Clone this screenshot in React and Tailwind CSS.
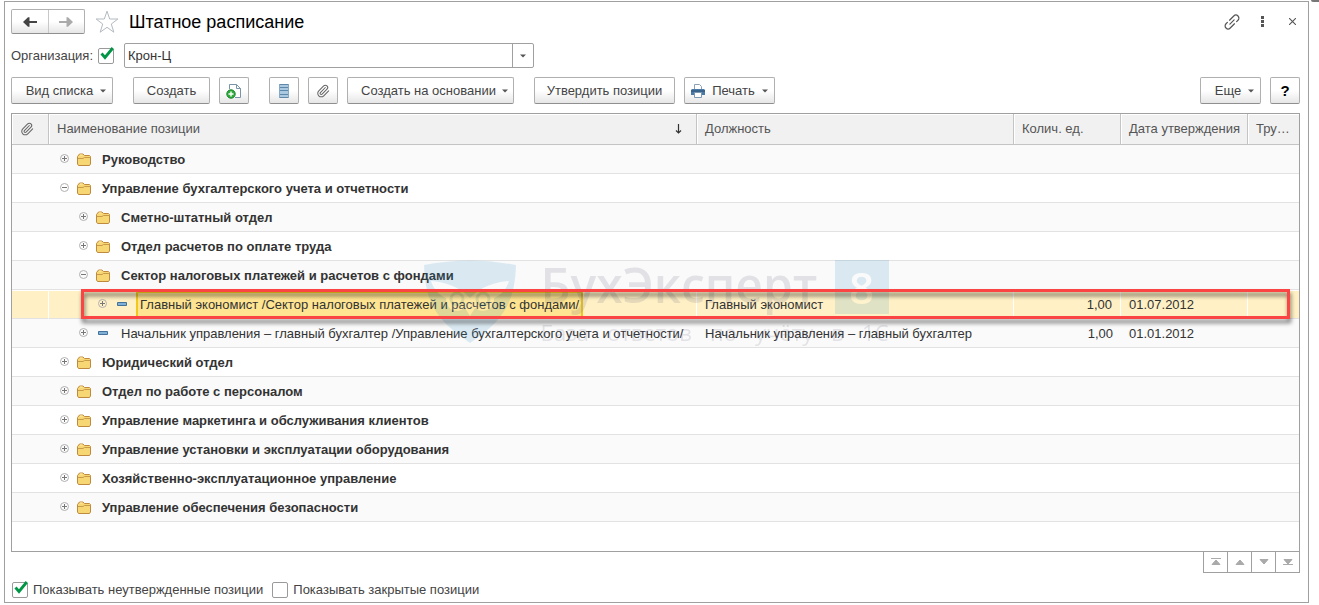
import React, { useState } from 'react';
import clsx from 'clsx';
import { Paperclip } from 'lucide-react';

const ROWS = [
  { id: 1, level: 0, kind: 'folder', name: 'Руководство' },
  { id: 2, level: 0, kind: 'folder', open: true, name: 'Управление бухгалтерского учета и отчетности' },
  { id: 3, level: 1, kind: 'folder', name: 'Сметно-штатный отдел' },
  { id: 4, level: 1, kind: 'folder', name: 'Отдел расчетов по оплате труда' },
  { id: 5, level: 1, kind: 'folder', open: true, name: 'Сектор налоговых платежей и расчетов с фондами' },
  {
    id: 6,
    level: 2,
    kind: 'item',
    name: 'Главный экономист /Сектор налоговых платежей и расчетов с фондами/',
    post: 'Главный экономист',
    count: '1,00',
    date: '01.07.2012',
  },
  {
    id: 7,
    level: 1,
    kind: 'item',
    name: 'Начальник управления – главный бухгалтер /Управление бухгалтерского учета и отчетности/',
    post: 'Начальник управления – главный бухгалтер',
    count: '1,00',
    date: '01.01.2012',
  },
  { id: 8, level: 0, kind: 'folder', name: 'Юридический отдел' },
  { id: 9, level: 0, kind: 'folder', name: 'Отдел по работе с персоналом' },
  { id: 10, level: 0, kind: 'folder', name: 'Управление маркетинга и обслуживания клиентов' },
  { id: 11, level: 0, kind: 'folder', name: 'Управление установки и эксплуатации оборудования' },
  { id: 12, level: 0, kind: 'folder', name: 'Хозяйственно-эксплуатационное управление' },
  { id: 13, level: 0, kind: 'folder', name: 'Управление обеспечения безопасности' },
];

const INDENT = ['pl-[11px]', 'pl-[30px]', 'pl-[49px]'];

function Caret() {
  return (
    <svg width="6" height="4" viewBox="0 0 6 4" className="mt-px shrink-0" fill="#555">
      <path d="M0 0.500h6L3 3.500z" />
    </svg>
  );
}

function Clip() {
  return <Paperclip size={14} strokeWidth={1.8} color="#666" />;
}

function DocAdd() {
  return (
    <svg width="16" height="16" viewBox="0 0 16 16" fill="none">
      <path d="M3.500 6V1.500h7l4 4v9H9" fill="#fff" stroke="#7b93a8" />
      <path d="M10.500 1.500v4h4" stroke="#7b93a8" />
      <circle cx="5" cy="11" r="4.200" fill="#2fae3b" stroke="#16832a" />
      <path d="M5 8.500v5M2.500 11h5" stroke="#fff" strokeWidth="1.400" />
    </svg>
  );
}

function ListLines() {
  return (
    <svg width="10" height="14" viewBox="0 0 10 14">
      <path d="M0 0h10v14H0z" fill="#a9c9e2" />
      <path d="M0 .5h10M0 3.500h10M0 6.500h10M0 10.500h10M0 13.500h10" stroke="#5f88a8" />
      <path d="M.5 0v14M9.500 0v14" stroke="#86a9c4" />
    </svg>
  );
}

function Printer() {
  return (
    <svg width="14" height="14" viewBox="0 0 14 14">
      <path d="M3.500 5V.5h5l2 2V5" fill="#fff" stroke="#8ba0b5" />
      <path d="M1 5h12l1 1v5h-3V9H3v2H0V6z" fill="#4a7aa5" />
      <path d="M0 7h14" stroke="#274f75" />
      <path d="M3.500 8.500h7v5h-7z" fill="#fff" stroke="#7e98b0" />
    </svg>
  );
}

function Star() {
  return (
    <svg width="24" height="24" viewBox="0 0 24 24" fill="#fff" stroke="#b3bac1" strokeWidth="1">
      <path d="M12 1.200 14.700 9h8.200l-6.600 5 2.500 8.200L12 17.300l-6.800 4.900L7.700 14 1.100 9h8.200z" />
    </svg>
  );
}

function Arrow({ dir, color }) {
  return (
    <svg width="14" height="10" viewBox="0 0 14 10" fill={color}>
      <path d={dir === 'left' ? 'M0 5 5 0.200h1.500v3.800H14v2H6.500v3.800H5z' : 'M14 5 9 0.200H7.500v3.800H0v2h7.500v3.800H9z'} />
    </svg>
  );
}

function Expander({ open }) {
  return (
    <svg width="9" height="11" viewBox="0 0 9 11" fill="none" className="shrink-0">
      <circle cx="4.500" cy="4.500" r="4" stroke="#b0b0b0" />
      <path d={open ? 'M2 4.500h5' : 'M2 4.500h5M4.500 2v5'} stroke="#777" />
    </svg>
  );
}

function Folder() {
  return (
    <svg width="14" height="14" viewBox="0 0 14 14" className="shrink-0">
      <path
        d="M.5 11V3.500l2-2.500h3.500l1.500 1.500h5l1 1V11l-1 1.500h-11z"
        fill="#f7d774"
        stroke="#c08a3e"
      />
      <path d="M1 5.500h5l1.500-1h6" fill="none" stroke="#c99a4a" />
      <path d="M3 2h2.500" stroke="#fff0b0" />
    </svg>
  );
}

function Dash() {
  return (
    <svg width="14" height="14" viewBox="0 0 14 14" className="shrink-0">
      <path d="M2.500 4.500h9v3h-9z" fill="#7fb0d6" stroke="#44729a" />
    </svg>
  );
}

function ToolButton({ className, children, ...rest }) {
  return (
    <button
      type="button"
      className={clsx(
        'flex h-[27px] shrink-0 items-center justify-center rounded-[2px] border border-[#b0b0b0] border-b-[#8f8f8f] bg-linear-to-b from-white from-50% to-[#e6e6e6] text-[#444] whitespace-nowrap',
        className
      )}
      {...rest}
    >
      {children}
    </button>
  );
}

function Check({ id, checked, onChange }) {
  return (
    <span className="relative block size-4 shrink-0">
      <input
        id={id}
        type="checkbox"
        checked={checked}
        onChange={(e) => onChange(e.target.checked)}
        className="block size-4 appearance-none rounded-[2px] border border-[#9a9a9a] bg-white"
      />
      {checked && (
        <svg width="16" height="16" viewBox="0 0 16 16" className="pointer-events-none absolute -top-px left-0" fill="none" stroke="#009646" strokeWidth="2.800">
          <path d="M3.500 6.500 7 10.500 14.800 1" />
        </svg>
      )}
    </span>
  );
}

function Watermark() {
  return (
    <div className="pointer-events-none absolute inset-x-0 top-[146px] flex justify-center opacity-15" aria-hidden="true">
      <svg width="94" height="84" viewBox="0 0 94 84" className="mr-6 shrink-0">
        <path d="M1 5Q47-4 93 5C92 45 78 62 47 83 16 62 2 45 1 5z" fill="#2e8fc4" />
        <path d="M8 21c14 1 29 6 39 17 10-11 25-16 39-17-3 9-8 14-15 17 1 10-9 17-19 10l-5 8-5-8c-10 7-20 0-19-10-7-3-12-8-15-17z" fill="#fff" />
        <g fill="none" stroke="#2e8fc4" strokeWidth="3">
          <circle cx="34" cy="39" r="6" />
          <circle cx="60" cy="39" r="6" />
        </g>
      </svg>
      <div className="w-[348px] font-['Open_Sans','Liberation_Sans',sans-serif] text-[#5a5a7a]">
        <div className="flex justify-between">
          <span className="text-[48px] leading-[50px] font-semibold">БухЭксперт</span>
          <span className="flex size-[54px] items-center justify-center bg-[#2e8fc4] text-[44px] font-semibold text-white">8</span>
        </div>
        <div className="mt-1 flex justify-between text-[22px] leading-[28px]">
          <span>База</span>
          <span>ответов</span>
          <span>по</span>
          <span>учёту</span>
          <span>в</span>
          <span>1С</span>
        </div>
      </div>
    </div>
  );
}

function PositionRow({ row, index, selected, onSelect }) {
  const cell = clsx(
    'h-[29px] border-b border-[#e2e2e2] p-0',
    selected ? 'border-t border-t-white border-r border-r-white bg-[#fff1c5] bg-clip-padding' : 'pt-px'
  );
  return (
    <tr onClick={onSelect} className={clsx('relative', index % 2 === 0 ? 'bg-[#fafafa]' : 'bg-white')}>
      <td className={cell}>
        {selected && (
          <div className="pointer-events-none absolute -top-px right-[9px] left-[69px] z-10 h-[30px] border-3 border-[#fb4444] drop-shadow-[1px_4px_2px_rgba(0,0,0,0.55)]" />
        )}
      </td>
      <td className={cell}>
        <div className={clsx('flex h-[27px] items-center', INDENT[row.level])}>
          <Expander open={row.open} />
          <span className="mr-[7px] ml-2">{row.kind === 'folder' ? <Folder /> : <Dash />}</span>
          <span
            className={clsx(
              'border-2 px-[2px] leading-[23px] whitespace-nowrap',
              row.kind === 'folder' && 'font-bold',
              selected ? 'border-[#f3c81c] bg-[#ffe591]' : 'border-transparent'
            )}
          >
            {row.name}
          </span>
        </div>
      </td>
      <td className={clsx(cell, 'truncate pl-2')}>{row.post}</td>
      <td className={clsx(cell, 'pr-2 text-right')}>{row.count}</td>
      <td className={clsx(cell, 'pl-2')}>{row.date}</td>
      <td className={clsx(cell, 'border-r-0')} />
    </tr>
  );
}

function HeadCell({ className, children }) {
  return (
    <th
      scope="col"
      className={clsx(
        'h-[31px] truncate border-r border-b border-[#c4c4c4] bg-[#f1f1f1] py-0 pr-0 pl-2 text-left font-normal text-[#555] shadow-[inset_1px_1px_0_#fff]',
        className
      )}
    >
      {children}
    </th>
  );
}

const PAGER = [
  { label: 'В начало', d: 'M0 .5h10M5 2 9 6.500H1z' },
  { label: 'Вверх', d: 'M5 2 9 6.500H1z' },
  { label: 'Вниз', d: 'M1 1.500h8L5 6z' },
  { label: 'В конец', d: 'M1 1.500h8L5 6zM0 6.500h10' },
];

export default function App() {
  const [org, setOrg] = useState('Крон-Ц');
  const [useOrg, setUseOrg] = useState(true);
  const [showDraft, setShowDraft] = useState(true);
  const [showClosed, setShowClosed] = useState(false);
  const [selectedId, setSelectedId] = useState(6);

  return (
    <div className="relative bg-white pt-px pr-[10px] pl-1 font-['Liberation_Sans',Arial,sans-serif] text-[13px] leading-4 text-[#333]">
      <div className="absolute top-0 right-0 h-[2px] w-2 rounded-bl-full bg-[#777]" />
      <div className="flex flex-col gap-[9px] border border-[#a0a0a0] pt-[7px] pr-2 pb-1 pl-[6px]">
        {/* Title bar */}
        <div className="flex h-[25px] items-center">
          <div className="flex h-[25px] w-[74px] rounded-[2px] border border-[#b0b0b0] border-b-[#8f8f8f] bg-linear-to-b from-white from-50% to-[#e6e6e6]">
            <button type="button" aria-label="Назад" className="flex flex-1 items-center justify-center border-r border-[#c8c8c8]">
              <Arrow dir="left" color="#444" />
            </button>
            <button type="button" aria-label="Вперед" className="flex flex-1 items-center justify-center">
              <Arrow dir="right" color="#aaa" />
            </button>
          </div>
          <button type="button" aria-label="В избранное" className="mx-[10px]">
            <Star />
          </button>
          <h1 className="text-[18px] leading-6 text-black">Штатное расписание</h1>
          <div className="-mr-[7px] ml-auto flex items-center text-[#555]">
            <button type="button" aria-label="Получить ссылку" className="flex w-[30px] justify-center">
              <svg width="18" height="18" viewBox="-9 -9 18 18" fill="none" stroke="currentColor" strokeWidth="1.200" strokeLinecap="round">
                <g transform="rotate(-45)">
                  <path d="M-.5-3H5.500a3 3 0 0 1 0 6H3.500" />
                  <path d="M.5 3H-5.500a3 3 0 0 1 0-6H-3.500" />
                  <path d="M-3 0H3" />
                </g>
              </svg>
            </button>
            <button type="button" aria-label="Меню" className="flex w-[30px] justify-center">
              <svg width="3" height="11" viewBox="0 0 3 11" fill="currentColor">
                <path d="M0 0h3v3H0zM0 4h3v3H0zM0 8h3v3H0z" />
              </svg>
            </button>
            <button type="button" aria-label="Закрыть" className="flex w-[30px] justify-center">
              <svg width="7" height="7" viewBox="0 0 7 7" stroke="currentColor" strokeWidth="1.100">
                <path d="M0 0l7 7M7 0 0 7" />
              </svg>
            </button>
          </div>
        </div>

        {/* Organization filter */}
        <div className="flex h-[25px] items-center">
          <label htmlFor="use-org" className="mr-[5px] text-[#444]">Организация:</label>
          <Check id="use-org" checked={useOrg} onChange={setUseOrg} />
          <div className="ml-[10px] flex h-[25px] w-[410px] rounded-[2px] border border-[#a0a0a0]">
            <input
              aria-label="Организация"
              value={org}
              onChange={(e) => setOrg(e.target.value)}
              className="min-w-0 flex-1 bg-transparent px-[3px] outline-none"
            />
            <button type="button" aria-label="Выбрать" className="flex w-[21px] items-center justify-center border-l border-[#a0a0a0]">
              <Caret />
            </button>
          </div>
        </div>

        {/* Toolbar */}
        <div className="flex gap-[9px]">
          <ToolButton className="mr-[11px] w-[102px] gap-[7px] pl-2">
            Вид списка <Caret />
          </ToolButton>
          <ToolButton className="w-[77px]">Создать</ToolButton>
          <ToolButton aria-label="Создать копированием" className="mr-[11px] w-[30px]"><DocAdd /></ToolButton>
          <ToolButton aria-label="Список" className="w-[30px]"><ListLines /></ToolButton>
          <ToolButton aria-label="Файлы" className="w-[30px]"><Clip /></ToolButton>
          <ToolButton className="mr-[11px] w-[167px] gap-[6px] pl-2">
            Создать на основании <Caret />
          </ToolButton>
          <ToolButton className="w-[141px]">Утвердить позиции</ToolButton>
          <ToolButton className="w-[91px] gap-[7px]">
            <Printer /> Печать <Caret />
          </ToolButton>
          <ToolButton className="ml-auto w-[61px] gap-[7px] pl-2">
            Еще <Caret />
          </ToolButton>
          <ToolButton className="w-[30px] text-[15px] font-bold text-black">?</ToolButton>
        </div>

        {/* Positions tree */}
        <div>
          <div className="relative border border-[#a0a0a0] pb-[29px]">
            <table className="w-full table-fixed border-separate border-spacing-0">
              <colgroup>
                <col className="w-[37px]" />
                <col />
                <col className="w-[317px]" />
                <col className="w-[107px]" />
                <col className="w-[127px]" />
                <col className="w-[51px]" />
              </colgroup>
              <thead>
                <tr>
                  <HeadCell><Clip /></HeadCell>
                  <HeadCell>
                    <span className="flex items-center justify-between pr-[14px]">
                      Наименование позиции
                      <svg width="7" height="10" viewBox="0 0 7 10" fill="none" stroke="#333" strokeWidth="1.200">
                        <path d="M3.500 0v9M1 6.500l2.500 2.500L6 6.500" />
                      </svg>
                    </span>
                  </HeadCell>
                  <HeadCell>Должность</HeadCell>
                  <HeadCell>Колич. ед.</HeadCell>
                  <HeadCell>Дата утверждения</HeadCell>
                  <HeadCell className="border-r-0">Тру…</HeadCell>
                </tr>
              </thead>
              <tbody>
                {ROWS.map((row, i) => (
                  <PositionRow
                    key={row.id}
                    row={row}
                    index={i}
                    selected={row.id === selectedId}
                    onSelect={() => setSelectedId(row.id)}
                  />
                ))}
              </tbody>
            </table>
            <Watermark />
          </div>
          <div className="-mt-px ml-auto flex w-[97px] border border-[#a0a0a0] bg-white">
            {PAGER.map((p, i) => (
              <button
                key={p.label}
                type="button"
                aria-label={p.label}
                className={clsx('flex h-5 flex-1 items-center justify-center', i > 0 && 'border-l border-[#a0a0a0]')}
              >
                <svg width="10" height="8" viewBox="0 0 10 8" fill="#aaa" stroke="#aaa">
                  <path d={p.d} />
                </svg>
              </button>
            ))}
          </div>
        </div>

        {/* Footer filters */}
        <div className="flex items-center gap-[9px] pl-px text-[#444]">
          <div className="flex items-center gap-[5px]">
            <Check id="show-draft" checked={showDraft} onChange={setShowDraft} />
            <label htmlFor="show-draft">Показывать неутвержденные позиции</label>
          </div>
          <div className="flex items-center gap-[5px]">
            <Check id="show-closed" checked={showClosed} onChange={setShowClosed} />
            <label htmlFor="show-closed">Показывать закрытые позиции</label>
          </div>
        </div>
      </div>
    </div>
  );
}
